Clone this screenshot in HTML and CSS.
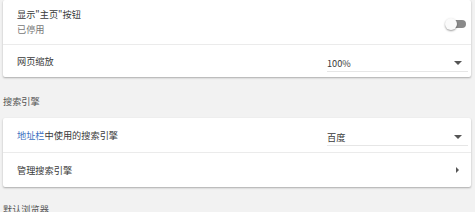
FILE: index.html
```html
<!DOCTYPE html>
<html lang="zh-CN">
<head>
<meta charset="utf-8">
<link rel="stylesheet" href="styles.css">
</head>
<body>
<div class="page">
  <div class="card first">
    <div class="row tall">
      <div class="label">
        <div class="title">显示"主页"按钮</div>
        <div class="sub">已停用</div>
      </div>
      <div class="toggle"><span class="knob"></span></div>
    </div>
    <div class="row">
      <div class="title">网页缩放</div>
      <div class="select"><span>100%</span><span class="caret"></span></div>
    </div>
  </div>
  <div class="section">搜索引擎</div>
  <div class="card">
    <div class="row">
      <div class="title"><span class="link">地址栏</span>中使用的搜索引擎</div>
      <div class="select"><span>百度</span><span class="caret"></span></div>
    </div>
    <div class="row">
      <div class="title">管理搜索引擎</div>
      <span class="chev"></span>
    </div>
  </div>
  <div class="section">默认浏览器</div>
</div>
</body>
</html>
```

FILE: styles.css
```css
html, body {
  margin: 0;
  padding: 0;
  background: #f2f2f2;
  font-family: "Noto Sans CJK SC", "Noto Sans", sans-serif;
  font-size: 9.2px;
  color: #3a3a3a;
  overflow: hidden;
}
.page {
  padding: 0 4px 0 3px;
  display: flex;
  flex-direction: column;
}
.card {
  background: #fff;
  border-radius: 2px;
  box-shadow: 0 1px 2px rgba(0,0,0,0.3);
}
.row {
  display: flex;
  align-items: center;
  justify-content: space-between;
  height: 34px;
  padding: 0 3px 0 14px;
}
.row + .row {
  border-top: 1px solid #ebebeb;
}
.first .row.tall {
  height: 44px;
}
.first .row:last-child {
  height: 32px;
}
.label {
  display: flex;
  flex-direction: column;
  gap: 3px;
  margin-top: -2px;
}
.title {
  line-height: 12px;
}
.sub {
  color: #777;
  line-height: 12px;
}
.link {
  color: #3b6fc1;
}
.section {
  height: 41px;
  line-height: 49px;
  color: #555;
}
.section:last-child {
  line-height: 44px;
}
.select {
  width: 141px;
  height: 18px;
  box-sizing: border-box;
  display: flex;
  align-items: center;
  justify-content: space-between;
  border-bottom: 1px solid #e6e6e6;
  margin-top: 4px;
}
.caret {
  width: 0;
  height: 0;
  border-left: 4px solid transparent;
  border-right: 4px solid transparent;
  border-top: 4px solid #555;
  margin-right: 6px;
}
.chev {
  width: 0;
  height: 0;
  border-top: 3px solid transparent;
  border-bottom: 3px solid transparent;
  border-left: 3px solid #555;
  margin-right: 9px;
}
.toggle {
  position: relative;
  width: 18px;
  height: 8px;
  border-radius: 4px;
  background: #8a8a8a;
  margin-right: 2px;
  margin-top: 4px;
}
.knob {
  position: absolute;
  left: -3px;
  top: -2px;
  width: 12px;
  height: 12px;
  border-radius: 50%;
  background: #fafafa;
  box-shadow: 0 1px 2px rgba(0,0,0,0.4);
}
```
